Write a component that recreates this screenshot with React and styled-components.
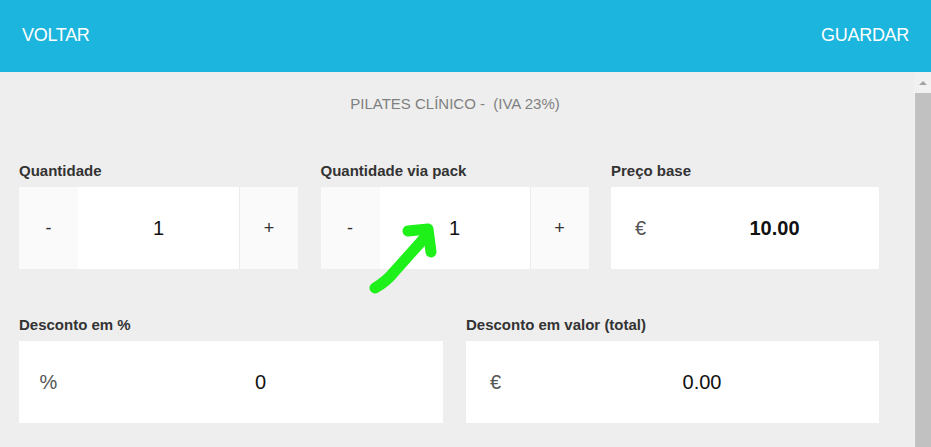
import React from "react";
import styled, { createGlobalStyle } from "styled-components";

const GlobalStyle = createGlobalStyle`
  html, body {
    margin: 0;
    padding: 0;
    background: #eeeeee;
    font-family: "Liberation Sans", Arial, sans-serif;
  }
  * { box-sizing: border-box; }
`;

export default function App() {
  return (
    <Page>
      <GlobalStyle />
      <Header>
        <HeaderLink>VOLTAR</HeaderLink>
        <HeaderLink>GUARDAR</HeaderLink>
      </Header>
      <Body>
        <Main>
          <Title>PILATES CLÍNICO -&nbsp; (IVA 23%)</Title>

          <RowTop>
            <Field>
              <Label>Quantidade</Label>
              <Box>
                <Side $grey>-</Side>
                <Value>1</Value>
                <Side $grey $divider>+</Side>
              </Box>
            </Field>
            <Field>
              <Label>Quantidade via pack</Label>
              <Box>
                <Side $grey>-</Side>
                <Value>1</Value>
                <Side $grey $divider>+</Side>
              </Box>
            </Field>
            <Field>
              <Label>Preço base</Label>
              <Box>
                <Side $symbol>€</Side>
                <Value $bold>10.00</Value>
              </Box>
            </Field>
          </RowTop>

          <RowBottom>
            <Field>
              <Label>Desconto em %</Label>
              <Box>
                <Side $symbol>%</Side>
                <Value>0</Value>
              </Box>
            </Field>
            <Field>
              <Label>Desconto em valor (total)</Label>
              <Box>
                <Side $symbol>€</Side>
                <Value>0.00</Value>
              </Box>
            </Field>
          </RowBottom>
        </Main>
        <Scrollbar>
          <ScrollArrow />
          <ScrollThumb />
        </Scrollbar>
      </Body>

      {/* green annotation arrow drawn over the form */}
      <Annotation width="931" height="447" viewBox="0 0 931 447">
        <path
          d="M375 288 Q387 281 394 272 L428 234"
          fill="none"
          stroke="#1ef01a"
          strokeWidth="11"
          strokeLinecap="round"
          strokeLinejoin="round"
        />
        <path
          d="M408 231 L428 229 L431 252"
          fill="none"
          stroke="#1ef01a"
          strokeWidth="11"
          strokeLinecap="round"
          strokeLinejoin="round"
        />
      </Annotation>
    </Page>
  );
}

const Page = styled.div`
  position: relative;
  width: 931px;
  height: 447px;
  overflow: hidden;
  display: flex;
  flex-direction: column;
  background: #eeeeee;
`;

const Header = styled.div`
  height: 72px;
  flex-shrink: 0;
  background-color: #1bb5dd;
  display: flex;
  justify-content: space-between;
  align-items: center;
  padding: 0 22px 2px 22px;
`;

const HeaderLink = styled.span`
  color: #ffffff;
  font-size: 18px;
  letter-spacing: -0.3px;
  cursor: pointer;
`;

const Body = styled.div`
  flex: 1;
  display: flex;
  min-height: 0;
`;

const Main = styled.div`
  flex: 1;
  padding: 22px 35px 0 19px;
`;

const Title = styled.div`
  text-align: center;
  font-size: 15px;
  line-height: 20px;
  color: #808080;
  margin-bottom: 48px;
  padding-left: 12px;
`;

const RowTop = styled.div`
  display: grid;
  grid-template-columns: 279px 268px 268px;
  column-gap: 22.5px;
  margin-bottom: 47px;
`;

const RowBottom = styled.div`
  display: grid;
  grid-template-columns: 424px 413px;
  column-gap: 23px;
`;

const Field = styled.div`
  display: flex;
  flex-direction: column;
`;

const Label = styled.div`
  font-size: 15px;
  font-weight: bold;
  line-height: 18px;
  color: #333333;
  margin-bottom: 7px;
`;

const Box = styled.div`
  height: 82px;
  display: flex;
  background: #ffffff;
`;

const Side = styled.div`
  width: 59px;
  flex-shrink: 0;
  display: flex;
  align-items: center;
  justify-content: center;
  background: ${(p) => (p.$grey ? "#fafafa" : "#ffffff")};
  border-left: ${(p) => (p.$divider ? "1px solid #ebebeb" : "none")};
  color: ${(p) => (p.$symbol ? "#555555" : "#333333")};
  font-size: ${(p) => (p.$symbol ? "20px" : "18px")};
`;

const Value = styled.div`
  flex: 1;
  display: flex;
  align-items: center;
  justify-content: center;
  font-size: 20px;
  font-weight: ${(p) => (p.$bold ? "bold" : "normal")};
  color: #111111;
`;

const Scrollbar = styled.div`
  width: 17px;
  flex-shrink: 0;
  display: flex;
  flex-direction: column;
  background: #f1f1f1;
  padding-left: 1px;
`;

const ScrollArrow = styled.div`
  height: 21px;
  flex-shrink: 0;
  display: flex;
  align-items: center;
  justify-content: center;
  &::after {
    content: "";
    border-left: 4px solid transparent;
    border-right: 4px solid transparent;
    border-bottom: 4px solid #a3a3a3;
  }
`;

const ScrollThumb = styled.div`
  flex: 1;
  background: #c1c1c1;
`;

const Annotation = styled.svg`
  position: absolute;
  left: 0;
  top: 0;
  pointer-events: none;
`;
